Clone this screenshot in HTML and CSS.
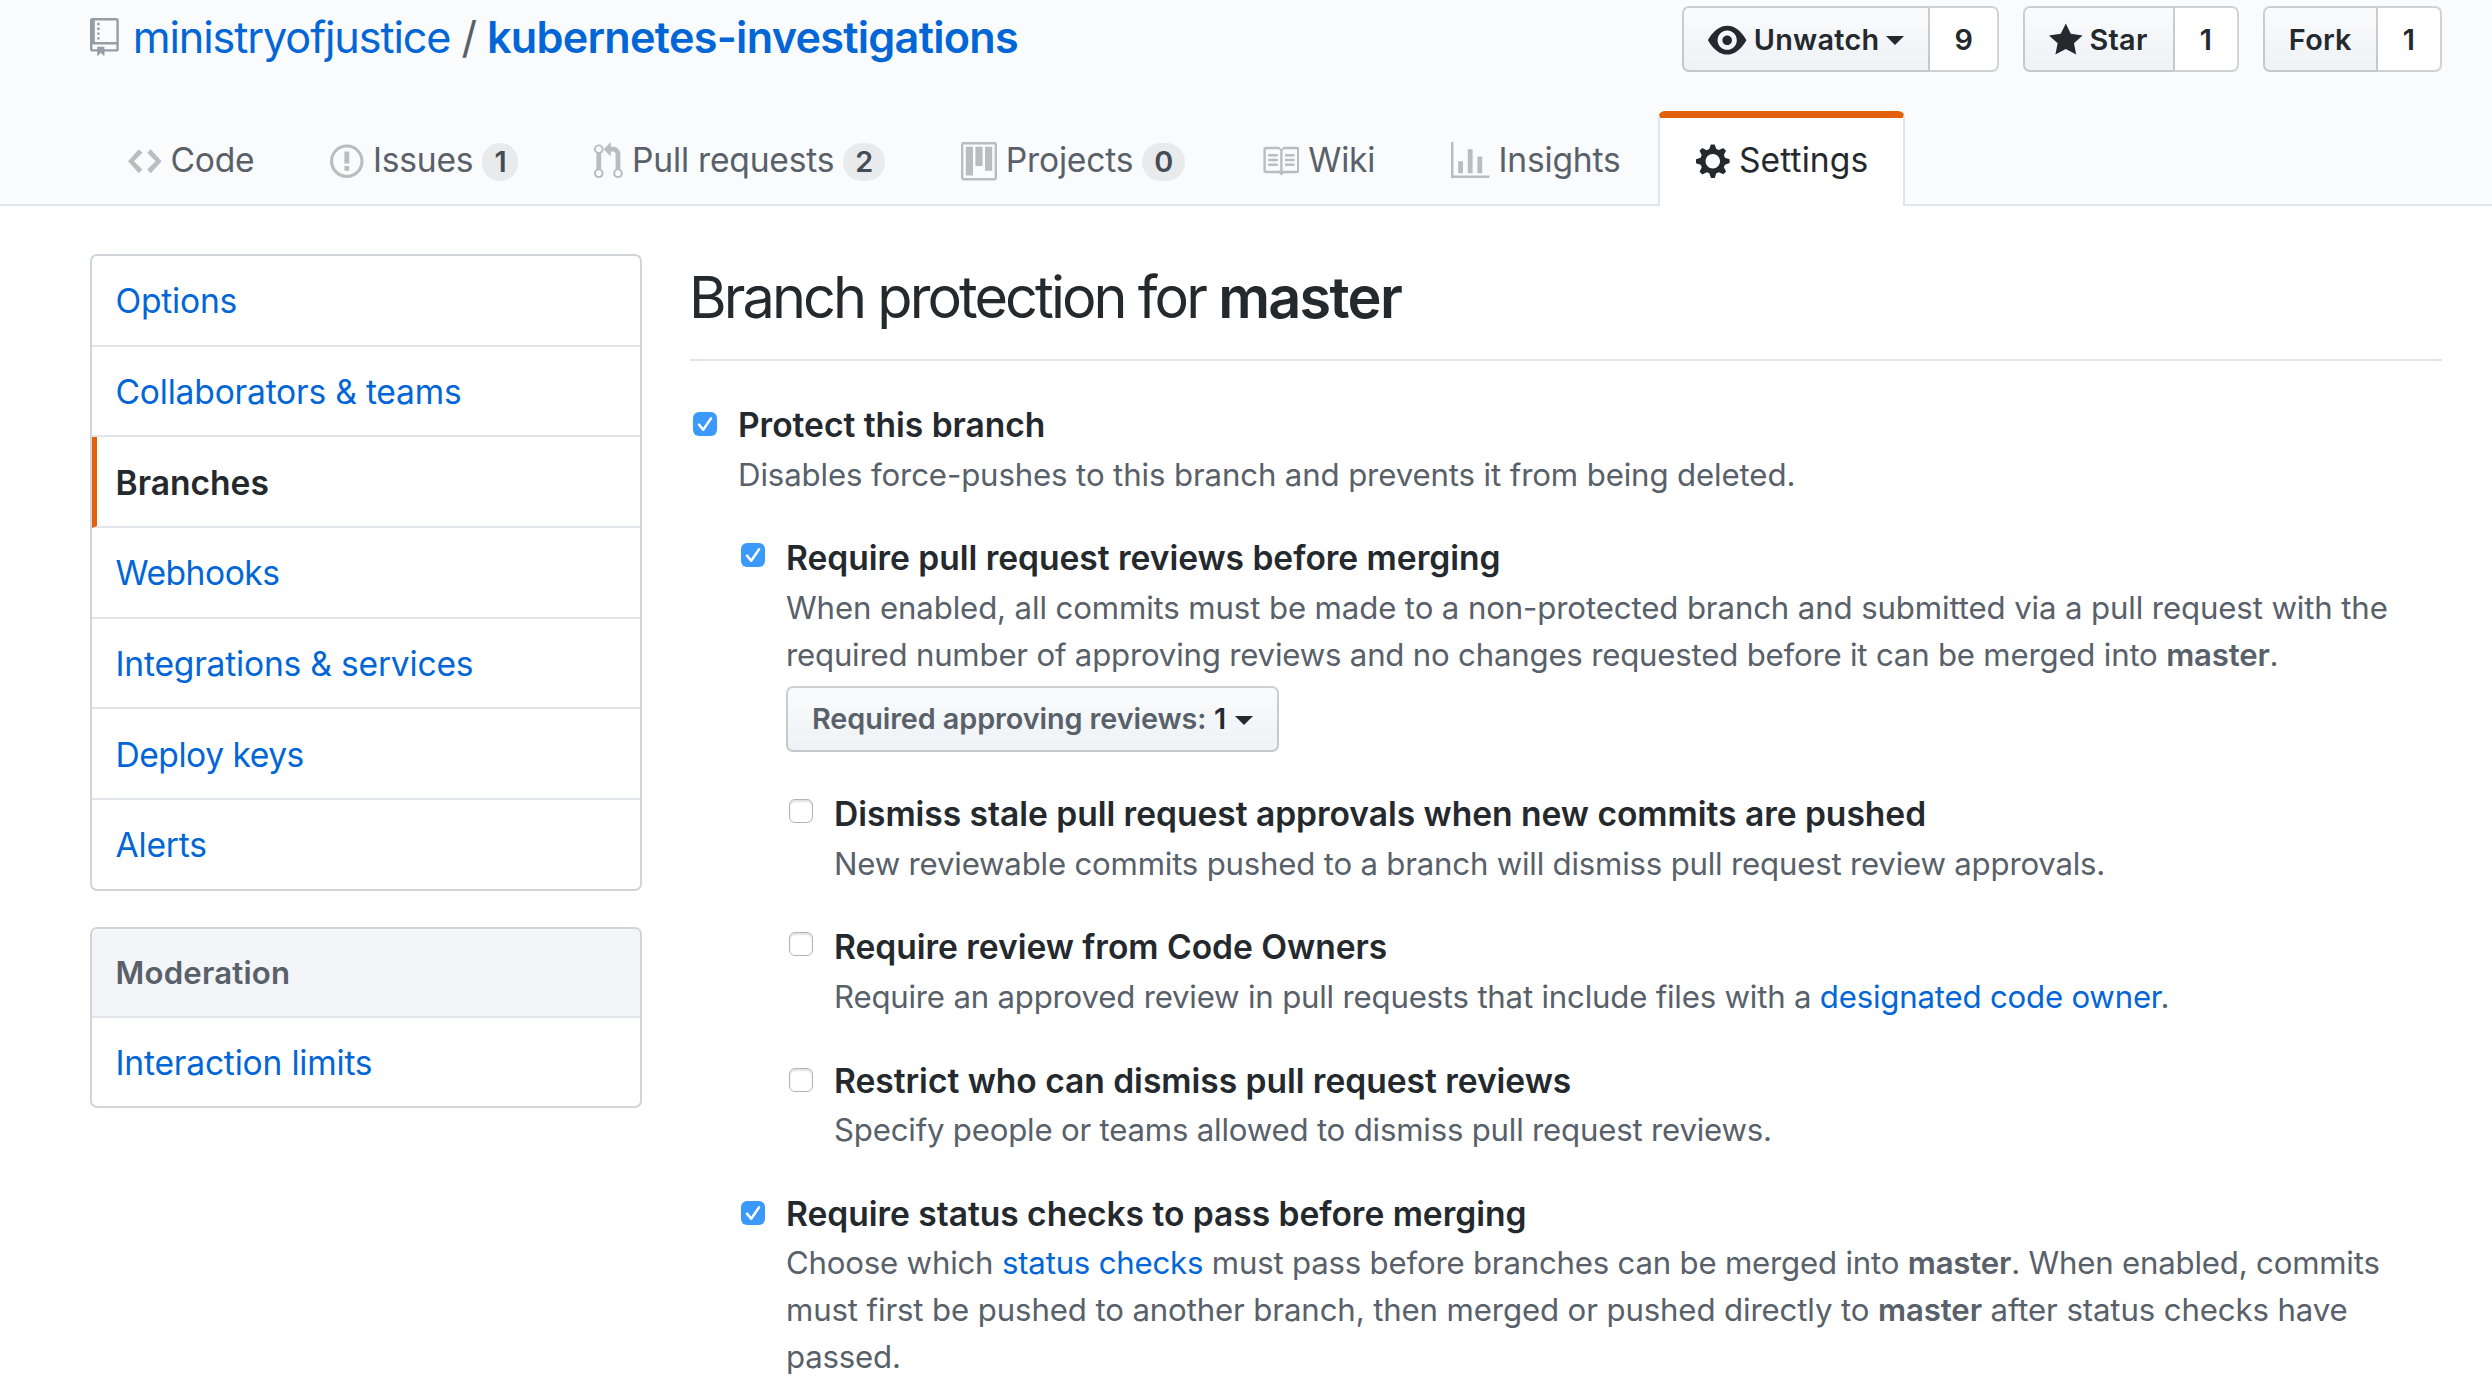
FILE: index.html
```html
<!DOCTYPE html>
<html lang="en">
<head>
<meta charset="utf-8">
<title>Branch protection for master</title>
<link rel="stylesheet" href="styles.css">
</head>
<body>
<header class="pagehead">
  <div class="repo-row">
    <h1 class="repo-title">
      <svg class="icon repo-icon" viewBox="0 0 12 16" width="28.8" height="38.4"><path d="M4 9H3V8h1v1zm0-3H3v1h1V6zm0-2H3v1h1V4zm0-2H3v1h1V2zm8-1v12c0 .55-.45 1-1 1H6v2l-1.5-1.5L3 16v-2H1c-.55 0-1-.45-1-1V1c0-.55.45-1 1-1h10c.55 0 1 .45 1 1zm-1 10H1v2h2v-1h3v1h5v-2zm0-10H2v9h9V1z"/></svg>
      <a class="owner" href="#">ministryofjustice</a>
      <span class="slash">/</span>
      <a class="repo" href="#">kubernetes-investigations</a>
    </h1>
    <ul class="actions">
      <li class="action">
        <a class="btn action-btn" href="#"><svg class="icon" viewBox="0 0 16 16" width="38.4" height="38.4"><path d="M8.06 2C3 2 0 8 0 8s3 6 8.06 6C13 14 16 8 16 8s-3-6-7.94-6zM8 12c-2.2 0-4-1.78-4-4 0-2.2 1.8-4 4-4 2.22 0 4 1.8 4 4 0 2.22-1.78 4-4 4zm2-4c0 1.11-.89 2-2 2-1.11 0-2-.89-2-2 0-1.11.89-2 2-2 1.11 0 2 .89 2 2z"/></svg><span>Unwatch</span><i class="caret"></i></a>
        <a class="count" href="#">9</a>
      </li>
      <li class="action">
        <a class="btn action-btn" href="#"><svg class="icon" viewBox="0 0 14 16" width="33.6" height="38.4"><path d="M14 6l-4.9-.64L7 1 4.9 5.36 0 6l3.6 3.26L2.67 14 7 11.67 11.33 14l-.93-4.74L14 6z"/></svg><span>Star</span></a>
        <a class="count" href="#">1</a>
      </li>
      <li class="action">
        <a class="btn action-btn" href="#"><span>Fork</span></a>
        <a class="count" href="#">1</a>
      </li>
    </ul>
  </div>
  <nav class="tabs">
    <a class="tab" href="#"><svg class="icon" viewBox="0 0 14 16" width="33.6" height="38.4"><path d="M9.5 3L8 4.5 11.5 8 8 11.5 9.5 13 14 8 9.5 3zm-5 0L0 8l4.5 5L6 11.5 2.5 8 6 4.5 4.5 3z"/></svg><span>Code</span></a>
    <a class="tab" href="#"><svg class="icon" viewBox="0 0 14 16" width="33.6" height="38.4"><path d="M7 2.3c3.14 0 5.7 2.56 5.7 5.7s-2.56 5.7-5.7 5.7A5.71 5.71 0 0 1 1.3 8c0-3.14 2.56-5.7 5.7-5.7zM7 1C3.14 1 0 4.14 0 8s3.14 7 7 7 7-3.14 7-7-3.14-7-7-7zm1 3H6v5h2V4zm0 6H6v2h2v-2z"/></svg><span>Issues</span><b class="badge">1</b></a>
    <a class="tab" href="#"><svg class="icon" viewBox="0 0 12 16" width="28.8" height="38.4"><path d="M11 11.28V5c-.03-.78-.34-1.47-.94-2.06C9.46 2.35 8.78 2.03 8 2H7V0L4 3l3 3V4h1c.27.02.48.11.69.31.21.2.3.42.31.69v6.28A1.993 1.993 0 0 0 10 15a1.993 1.993 0 0 0 1-3.72zm-1 2.92c-.66 0-1.2-.55-1.2-1.2 0-.65.55-1.2 1.2-1.2.65 0 1.2.55 1.2 1.2 0 .65-.55 1.2-1.2 1.2zM4 3c0-1.11-.89-2-2-2a1.993 1.993 0 0 0-1 3.72v6.56A1.993 1.993 0 0 0 2 15a1.993 1.993 0 0 0 1-3.72V4.72c.59-.34 1-.98 1-1.72zm-.8 10c0 .66-.55 1.2-1.2 1.2-.65 0-1.2-.55-1.2-1.2 0-.65.55-1.2 1.2-1.2.65 0 1.2.55 1.2 1.2zM2 4.2C1.34 4.2.8 3.65.8 3c0-.65.55-1.2 1.2-1.2.65 0 1.2.55 1.2 1.2 0 .65-.55 1.2-1.2 1.2z"/></svg><span>Pull requests</span><b class="badge">2</b></a>
    <a class="tab" href="#"><svg class="icon" viewBox="0 0 15 16" width="36" height="38.4"><path fill-rule="evenodd" d="M10 12h3V2h-3v10zm-4-2h3V2H6v8zm-4 4h3V2H2v12zm-1 1h13V1H1v14zM14 0H1a1 1 0 0 0-1 1v14a1 1 0 0 0 1 1h13a1 1 0 0 0 1-1V1a1 1 0 0 0-1-1z"/></svg><span>Projects</span><b class="badge">0</b></a>
    <a class="tab" href="#"><svg class="icon" viewBox="0 0 16 16" width="38.4" height="38.4"><path d="M3 5h4v1H3V5zm0 3h4V7H3v1zm0 2h4V9H3v1zm11-5h-4v1h4V5zm0 2h-4v1h4V7zm0 2h-4v1h4V9zm2-6v9c0 .55-.45 1-1 1H9.5l-1 1-1-1H2c-.55 0-1-.45-1-1V3c0-.55.45-1 1-1h5.5l1 1 1-1H15c.55 0 1 .45 1 1zm-8 .5L7.5 3H2v9h6V3.5zm7-.5H9.5l-.5.5V12h6V3z"/></svg><span>Wiki</span></a>
    <a class="tab" href="#"><svg class="icon" viewBox="0 0 16 16" width="38.4" height="38.4"><path d="M16 14v1H0V0h1v14h15zM5 13H3V8h2v5zm4 0H7V3h2v10zm4 0h-2V6h2v7z"/></svg><span>Insights</span></a>
    <a class="tab selected" href="#"><svg class="icon" viewBox="0 0 14 16" width="33.6" height="38.4"><path d="M14 8.77v-1.6l-1.94-.64-.45-1.09.88-1.84-1.13-1.13-1.81.91-1.09-.45-.69-1.92h-1.6l-.63 1.94-1.11.45-1.84-.88-1.13 1.13.91 1.81-.45 1.09L0 7.23v1.59l1.94.64.45 1.09-.88 1.84 1.13 1.13 1.81-.91 1.09.45.69 1.92h1.59l.63-1.94 1.11-.45 1.84.88 1.13-1.13-.92-1.81.47-1.09L14 8.75v.02zM7 11c-1.66 0-3-1.34-3-3s1.34-3 3-3 3 1.34 3 3-1.34 3-3 3z"/></svg><span>Settings</span></a>
  </nav>
</header>
<div class="layout">
  <aside class="sidebar">
    <nav class="menu">
      <a class="menu-item" href="#">Options</a>
      <a class="menu-item" href="#">Collaborators &amp; teams</a>
      <a class="menu-item current" href="#">Branches</a>
      <a class="menu-item tight" href="#">Webhooks</a>
      <a class="menu-item" href="#">Integrations &amp; services</a>
      <a class="menu-item tight" href="#">Deploy keys</a>
      <a class="menu-item" href="#">Alerts</a>
    </nav>
    <nav class="menu">
      <h3 class="menu-heading">Moderation</h3>
      <a class="menu-item" href="#">Interaction limits</a>
    </nav>
  </aside>
  <main class="content">
    <h2 class="subhead">Branch protection for <strong>master</strong></h2>
    <section class="option">
      <span class="check checked low"><svg viewBox="0 0 24 24" width="24" height="24"><path d="M6 12.6l4.2 5.1L18 6.4"/></svg></span>
      <div class="label">Protect this branch</div>
      <p class="note loose">Disables force-pushes to this branch and prevents it from being deleted.</p>
      <section class="option">
        <span class="check checked"><svg viewBox="0 0 24 24" width="24" height="24"><path d="M6 12.6l4.2 5.1L18 6.4"/></svg></span>
        <div class="label">Require pull request reviews before merging</div>
        <p class="note"><span class="loose">When enabled, all commits must be made to a non-protected branch and submitted via a pull request with the</span><br>required number of approving reviews and no changes requested before it can be merged into <strong>master</strong>.</p>
        <a class="btn select-btn" href="#"><span class="select-text">Required approving reviews:</span><span class="select-value">1</span><i class="caret"></i></a>
        <section class="option">
          <span class="check"></span>
          <div class="label">Dismiss stale pull request approvals when new commits are pushed</div>
          <p class="note">New reviewable commits pushed to a branch will dismiss pull request review approvals.</p>
        </section>
        <section class="option">
          <span class="check"></span>
          <div class="label">Require review from Code Owners</div>
          <p class="note">Require an approved review in pull requests that include files with a <a href="#">designated code owner</a>.</p>
        </section>
        <section class="option">
          <span class="check low"></span>
          <div class="label">Restrict who can dismiss pull request reviews</div>
          <p class="note">Specify people or teams allowed to dismiss pull request reviews.</p>
        </section>
      </section>
      <section class="option">
        <span class="check checked low"><svg viewBox="0 0 24 24" width="24" height="24"><path d="M6 12.6l4.2 5.1L18 6.4"/></svg></span>
        <div class="label">Require status checks to pass before merging</div>
        <p class="note">Choose which <a href="#">status checks</a> must pass before branches can be merged into <strong>master</strong>. When enabled, commits<br><span class="loose">must first be pushed to another branch, then merged or pushed directly to <strong>master</strong> after status checks have</span><br>passed.</p>
      </section>
    </section>
  </main>
</div>
</body>
</html>
```
FILE: styles.css
```css
* { box-sizing: border-box; }
body {
  margin: 0;
  height: 1384px;
  overflow: hidden;
  background: #fff;
  color: #24292e;
  font-family: Inter, "Liberation Sans", sans-serif;
  font-size: 33.6px;
  line-height: 50.4px;
}
a { color: #0366d6; text-decoration: none; }
strong { font-weight: 600; }
.icon { display: block; flex: none; fill: currentColor; }

.pagehead {
  display: flex;
  flex-direction: column;
  justify-content: space-between;
  height: 206px;
  padding: 6px 50px 0 90px;
  background: #fafbfc;
  border-bottom: 2px solid #e1e4e8;
}
.repo-row { display: flex; justify-content: space-between; align-items: flex-start; }
.repo-title {
  display: flex;
  align-items: center;
  margin: 0;
  font-size: 43.2px;
  font-weight: 400;
  line-height: 62px;
}
.repo-icon { color: #959da5; margin-right: 14px; }
.owner { letter-spacing: -0.026em; }
.slash { margin: 0 10px 0 11px; color: #586069; }
.repo { font-weight: 600; letter-spacing: -0.017em; }

.actions { display: flex; gap: 24px; margin: 0; padding: 0; list-style: none; }
.action { display: flex; height: 66px; }
.btn {
  display: flex;
  align-items: center;
  height: 66px;
  border: 2px solid rgba(27, 31, 35, 0.2);
  border-radius: 7px;
  background: linear-gradient(-180deg, #fafbfc 0%, #eff3f6 90%) border-box;
  color: #24292e;
  font-size: 28.8px;
  font-weight: 600;
  line-height: 48px;
  letter-spacing: 0.01em;
}
.action-btn { gap: 7px; padding: 2px 24px 0; border-radius: 7px 0 0 7px; }
.action:nth-child(2) .action-btn { padding-right: 25px; }
.count {
  padding: 0 25px;
  border: 2px solid rgba(27, 31, 35, 0.2);
  border-left: 0;
  border-radius: 0 7px 7px 0;
  background: #fff;
  color: #24292e;
  font-size: 28.8px;
  font-weight: 600;
  line-height: 64px;
}
.action:first-child .count { padding: 0 24px; }
.caret {
  width: 0;
  height: 0;
  border: 9px solid transparent;
  border-top-color: currentColor;
  border-bottom: 0;
}

.tabs { display: flex; align-items: flex-end; margin-bottom: -2px; letter-spacing: -0.006em; }
.tab {
  display: flex;
  align-items: center;
  height: 95px;
  padding: 4px 36px 0;
  border: 2px solid transparent;
  border-bottom: 0;
  color: #586069;
}
.tab .icon { margin-right: 8.9px; color: #babcbe; }
.tab span { margin-top: -2.5px; }
.tab.selected {
  border-top: 7px solid #e36209;
  border-color: #e36209 #e1e4e8 transparent;
  border-radius: 7px 7px 0 0;
  background: #fff;
  color: #24292e;
  padding: 0 35px 2px 36px;
  letter-spacing: 0.003em;
}
.tab.selected .icon { color: inherit; }
.badge {
  margin-left: 9px;
  padding: 0 12px;
  border-radius: 20px;
  background: #e8eaeb;
  color: #444d56;
  font-size: 28.8px;
  font-weight: 600;
  line-height: 38px;
}

.layout { display: flex; gap: 48px; padding: 48px 50px 0 90px; }
.sidebar { flex: none; width: 552px; }
.menu {
  margin-bottom: 36px;
  border: 2px solid #d1d5da;
  border-radius: 7px;
  overflow: hidden;
}
.menu-item {
  display: block;
  padding: 20.2px 24px 18.1px 23.5px;
  border-bottom: 2px solid #e1e4e8;
  letter-spacing: -0.006em;
}
.menu-item:last-child { border-bottom: 0; }
.menu-item.tight { letter-spacing: -0.014em; }
.menu-item.current {
  padding-left: 18.5px;
  border-left: 5px solid #e36209;
  color: #24292e;
  font-weight: 600;
  letter-spacing: 0;
}
.menu-heading {
  margin: 0;
  padding: 20.6px 23.5px 18.4px;
  border-bottom: 2px solid #e1e4e8;
  background: #f3f5f8;
  color: #586069;
  font-size: 31.2px;
  font-weight: 600;
  line-height: 48px;
  letter-spacing: 0.006em;
}

.content { flex: 1; min-width: 0; }
.subhead {
  margin: 0 0 39px;
  padding-bottom: 18px;
  border-bottom: 2px solid #e1e4e8;
  font-size: 57.6px;
  font-weight: 400;
  line-height: 87px;
  letter-spacing: -0.051em;
  text-indent: -1px;
}
.subhead strong { letter-spacing: -0.03em; }
.option {
  display: grid;
  grid-template-columns: 48px minmax(0, 1fr);
}
.option > * { grid-column: 2; }
.option > .option { margin-top: 34.7px; }
.option > .check {
  grid-column: 1;
  grid-row: 1;
  width: 24px;
  height: 24px;
  margin: 10px 0 0 3px;
  border: 1px solid #b4b4b4;
  border-radius: 6px;
  background: #fff;
  box-shadow: inset 0 2px 2px rgba(0, 0, 0, 0.12);
}
.option > .check.checked { border: 0; background: #3b99fc; box-shadow: none; }
.option > .check.low { margin-top: 12px; }
.check svg { display: block; fill: none; stroke: #fff; stroke-width: 2.5; stroke-linecap: round; stroke-linejoin: round; }
.label { grid-row: 1; font-weight: 600; letter-spacing: -0.001em; }
.note {
  margin: 1.3px 0 0;
  color: #586069;
  font-size: 31.2px;
  line-height: 46.8px;
  white-space: nowrap;
  letter-spacing: -0.0066em;
}
.loose { letter-spacing: -0.004em; }
.select-btn { justify-self: start; margin: 8px 0 2px; padding: 0 24px; letter-spacing: -0.003em; }
.select-text { color: #586069; }
.select-value { margin: 0 9px 0 7.5px; }
.select-btn .caret { margin-top: 3px; }
```
